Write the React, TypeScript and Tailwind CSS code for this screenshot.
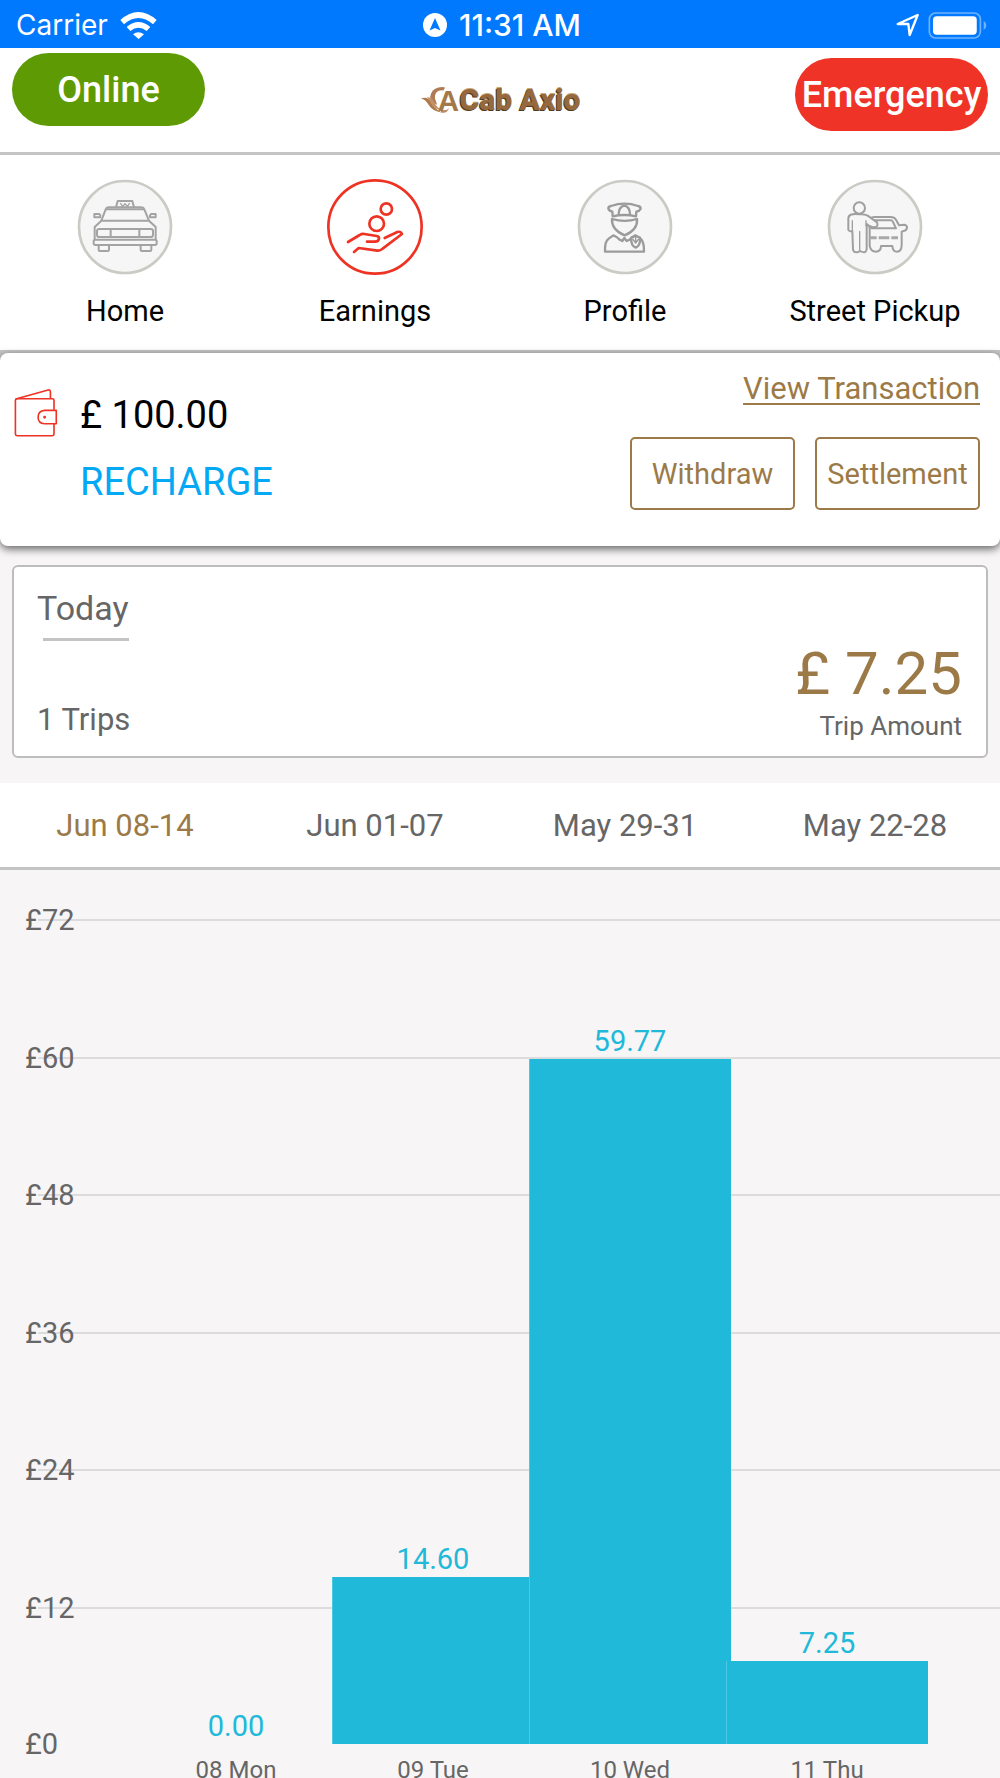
import type { ReactNode } from "react";

type NavItem = { label: string; icon: ReactNode; active?: boolean };

type Day = { label: string; amount: number };

const AXIS_MAX = 72;
const ticks = [72, 60, 48, 36, 24, 12];

const days: Day[] = [
  { label: "08 Mon", amount: 0 },
  { label: "09 Tue", amount: 14.6 },
  { label: "10 Wed", amount: 59.77 },
  { label: "11 Thu", amount: 7.25 },
];

const weeks = ["Jun 08-14", "Jun 01-07", "May 29-31", "May 22-28"];

const navItems: NavItem[] = [
  { label: "Home", icon: <TaxiIcon /> },
  { label: "Earnings", icon: <EarningsIcon />, active: true },
  { label: "Profile", icon: <DriverIcon /> },
  { label: "Street Pickup", icon: <PickupIcon /> },
];

function TaxiIcon() {
  return (
    <g fill="none" stroke="#a3a3a3" strokeWidth="6" strokeLinejoin="round">
      <path d="M168 126l5-19h44l5 19" />
      <path d="M181 113l7 11 7-9 7 9 7-11" strokeWidth="4" />
      <path d="M124 166l13-34q2-6 8-6h100q6 0 8 6l14 34z" />
      <path d="M138 132h114" />
      <path d="M121 150l-3-4h-15v10h17zM270 150l3-4h14v10h-17z" />
      <path d="M124 166l-20 19v38M267 166l20 19v38" />
      <rect x="111" y="191" width="168" height="24" rx="7" />
      <path d="M152 191v24M238 191v24" />
      <rect x="101" y="223" width="189" height="16" rx="5" />
      <path d="M116 239v14q0 4 4 4h23q4 0 4-4v-14M242 239v14q0 4 4 4h24q4 0 4-4v-14" />
    </g>
  );
}

function EarningsIcon() {
  return (
    <g fill="none" stroke="#ee3324" strokeWidth="8" strokeLinecap="round" strokeLinejoin="round">
      <circle cx="229" cy="131" r="17" />
      <circle cx="200" cy="175" r="22" />
      <path d="M114 230l35-21q6-4 14-3l37 6q8 2 7 8-1 9-12 9h-24" />
      <path d="M224 218l38-18q10-3 14 6l-58 44q-7 7-16 6l-56-8-14 12" />
    </g>
  );
}

function DriverIcon() {
  return (
    <g fill="none" stroke="#9b9b9b" strokeWidth="7" strokeLinejoin="round">
      <path d="M145 130q0-7 8-8 41-14 81 0 8 1 8 8-3 7-13 9l-1 14q-35-8-70 0l-1-14q-10-2-12-9z" />
      <path d="M176 149q0-25 17-28 17 3 17 28" />
      <path d="M156 161q38 11 75 0 3 32-37 49-40-17-38-49z" />
      <path d="M135 259q-1-32 11-39l14-10q11 4 19 13l8 4 6-9 7 9 9-4q7-9 17-13l14 9q13 8 12 40z" />
      <path d="M214 217l13-5 13 5q2 24-13 30-15-6-13-30z" fill="#f6f6f6" />
      <path d="M218 221l9 12 9-12M227 215v16" strokeWidth="4" />
    </g>
  );
}

function PickupIcon() {
  return (
    <g fill="#f6f6f6" stroke="#9f9f9f" strokeWidth="6" strokeLinejoin="round">
      <path d="M178 170q0-14 15-15h49q11 0 16 8l9 17 16-2q8 1 8 8-1 10-10 11l-6 2v41q-1 19-14 19-13 0-14-17h-34q0 17-16 17-14 0-18-17v-49z" />
      <path d="M188 165h54q5 0 7 5l9 19h-74z" />
      <circle cx="148" cy="128" r="17" />
      <path d="M148 147q-32-5-33 12v35q2 5 12 3l2 55q2 10 12 9l10-4q16 10 19-5v-76q12 13 26 9 10-2 5-14l-28-20q-9-5-25-4z" />
      <path d="M149 197v57M127 165v29M168 165v17" strokeWidth="4" />
      <path d="M179 217h21M206 217h32M244 217h20" stroke="#a9a9a9" strokeWidth="9" />
    </g>
  );
}

function WalletIcon() {
  return (
    <svg viewBox="42 146 135 148" className="h-12 w-11" fill="none" stroke="#ee3324" strokeWidth="5" strokeLinejoin="round" aria-hidden="true">
      <path d="M47 177l100-28q7-1 7 6v21" />
      <path d="M165 210v-29q0-5-5-5H51q-5 0-5 5v104q0 5 5 5h109q5 0 5-5v-31" />
      <path d="M172 212h-36q-20 2-20 21 0 19 20 20h36z" />
      <circle cx="136" cy="233" r="2" />
    </svg>
  );
}

function Logo() {
  return (
    <div className="flex items-center">
      <svg viewBox="54 40 122 88" className="h-7 w-10 overflow-visible" aria-hidden="true">
        <path d="M84 74q4-24 26-29 12-3 21 0l-5 9q-28-3-27 25l7 20q-22-9-22-25z" fill="#b07a52" />
        <path d="M55 80q18-9 31 8 7 21 34 35-28-3-41-24-9-17-24-19z" fill="#ad7a4c" />
        <path d="M73 75q18 0 24 15 8 20 27 26-28-1-36-20-5-14-15-21z" fill="#c39268" />
        <path d="M118 112q14 10 26-3-9 20-26 14z" fill="#b98960" />
        <text x="107" y="119" fontFamily="Liberation Sans, sans-serif" fontWeight="700" fontSize="94" fill="#a4794a">A</text>
      </svg>
      <span className="text-[30px] leading-8 font-black text-[#96683e] [text-shadow:-1px_1px_0_#4f3a22,0_-1px_0_#c8a878]">Cab Axio</span>
    </div>
  );
}

function StatusBar() {
  return (
    <div className="grid h-12 shrink-0 grid-cols-[1fr_auto_1fr] items-center bg-[#0079ff] pt-[2px] pl-4 pr-3 font-['Inter',sans-serif] text-[28px] leading-8 text-white">
      <div className="flex items-center gap-3">
        <span>Carrier</span>
        <svg viewBox="360 30 111 81" className="h-[27px] w-[37px]" fill="currentColor" aria-hidden="true">
          <path d="M361 54q54-48 109 0l-11 13q-44-38-87 0z" />
          <path d="M380 75q35-30 71 0l-11 12q-25-20-49 0z" />
          <path d="M399 97q16-13 33 0l-16 14z" />
        </svg>
      </div>
      <div className="flex items-center gap-3 text-[30px] font-medium">
        <svg viewBox="0 0 24 24" className="size-6" aria-hidden="true">
          <circle cx="12" cy="12" r="12" fill="#fff" />
          <path d="M12 5l5.500 12.500L12 15l-5.500 2.500z" fill="#0079ff" />
        </svg>
        <span>11:31 AM</span>
      </div>
      <div className="flex items-center justify-end gap-2">
        <svg viewBox="1185 39 72 72" className="size-6" fill="none" stroke="#fff" strokeWidth="7" strokeLinejoin="round" aria-hidden="true">
          <path d="M1190 72l60-27-24 60-4-33z" />
        </svg>
        <svg viewBox="1284 32 180 82" className="h-[27px] w-[60px]" aria-hidden="true">
          <rect x="1287" y="35" width="155" height="76" rx="19" fill="none" stroke="#6db3ff" strokeWidth="5" />
          <rect x="1298" y="45" width="133" height="56" rx="11" fill="#fff" />
          <path d="M1452 59q8 4 8 14t-8 14z" fill="#6db3ff" />
        </svg>
      </div>
    </div>
  );
}

function Header() {
  return (
    <header className="grid h-[107px] shrink-0 grid-cols-[1fr_auto_1fr] items-start border-b-3 border-[#c4c4c4] bg-white px-3">
      <button type="button" className="mt-[5px] h-[73px] w-[193px] rounded-full bg-[#5e9a04] text-[36px] leading-10 font-medium text-white">
        Online
      </button>
      <div className="mt-9">
        <Logo />
      </div>
      <button type="button" className="mt-[10px] h-[73px] w-[193px] justify-self-end rounded-full bg-[#ef3326] text-[36px] leading-10 font-medium text-white">
        Emergency
      </button>
    </header>
  );
}

function MainNav() {
  return (
    <nav className="grid shrink-0 grid-cols-4 border-b-3 border-[#c4c4c4] bg-white pt-6 pb-[21px]">
      {navItems.map((item) => (
        <a key={item.label} href="#" className="flex flex-col items-center gap-[18px] text-[29px] leading-9 text-black">
          <svg viewBox="51 41 288 288" className="size-24" aria-hidden="true">
            <circle
              cx="195"
              cy="185"
              r={item.active ? 140 : 138}
              fill={item.active ? "#fff" : "#f6f6f6"}
              stroke={item.active ? "#ee3324" : "#cbcac4"}
              strokeWidth="8"
            />
            {item.icon}
          </svg>
          {item.label}
        </a>
      ))}
    </nav>
  );
}

function WalletCard() {
  const outline = "h-[73px] w-[165px] rounded-[5px] border-2 border-[#9c7a48] text-[29px] leading-9";

  return (
    <section className="bg-linear-to-b from-[#c4c4c4] from-10% to-[#f7f5f6] to-10%">
      <div className="flex justify-between rounded-lg bg-white pl-[14px] pr-5 shadow-[0_3px_8px_rgba(0,0,0,0.6)]">
        <div className="flex gap-[22px] pt-9 pb-10">
          <WalletIcon />
          <div className="flex flex-col items-start gap-[19px] pt-[2px] text-[38px] leading-12">
            <span className="text-black">£ 100.00</span>
            <button type="button" className="text-[#03a9f4]">RECHARGE</button>
          </div>
        </div>
        <div className="flex flex-col items-end gap-7 pt-4 text-[#9c7a48]">
          <a href="#" className="text-[31px] leading-10 underline decoration-2 underline-offset-4">View Transaction</a>
          <div className="flex gap-5">
            <button type="button" className={outline}>Withdraw</button>
            <button type="button" className={outline}>Settlement</button>
          </div>
        </div>
      </div>
    </section>
  );
}

function TodayCard() {
  return (
    <section className="mx-3 mt-[19px] mb-[25px] flex h-[193px] shrink-0 justify-between rounded-md border-2 border-[#bdbdbd] bg-white pl-[23px] pr-6 text-[#666]">
      <div className="flex flex-col pt-[21px] pb-4">
        <h2 className="text-[34px] leading-10">Today</h2>
        <div className="mt-[10px] ml-[6px] h-[3px] w-[86px] bg-[#c4c4c4]" />
        <span className="mt-auto text-[31px] leading-10">1 Trips</span>
      </div>
      <div className="flex flex-col items-end justify-end pb-[10px]">
        <span className="text-[60px] leading-16 text-[#9c7a48]">£ 7.25</span>
        <span className="text-[26px] leading-10">Trip Amount</span>
      </div>
    </section>
  );
}

function WeekTabs() {
  return (
    <div className="grid shrink-0 grid-cols-4 border-b-3 border-[#c4c4c4] bg-white">
      {weeks.map((week, i) => (
        <button
          key={week}
          type="button"
          className={["pt-[23px] pb-[21px] text-[31px] leading-10", i === 0 ? "text-[#9c7a48]" : "text-[#666]"].join(" ")}
        >
          {week}
        </button>
      ))}
    </div>
  );
}

function EarningsChart() {
  return (
    <section className="shrink-0 pt-[49px] text-[#666]">
      <div className="relative h-[825px] text-[29px] leading-9">
        <div className="flex h-full flex-col">
          {ticks.map((tick) => (
            <div key={tick} className="relative flex-1">
              <div className="ml-[38px] h-[2px] bg-[#dcdcdc]" />
              <span className="absolute -top-[17px] left-[25px]">£{tick}</span>
            </div>
          ))}
          <span className="absolute -bottom-[18px] left-[25px]">£0</span>
        </div>

        {/* Bars */}
        <div className="absolute inset-0 grid grid-cols-4 pl-[135px] pr-[77px]">
          {days.map((day) => (
            <div key={day.label} className="-mr-[5px] flex flex-col justify-end text-center">
              <span className="text-[#20b9d9]">{day.amount.toFixed(2)}</span>
              <div
                className="shrink-0 border-l border-[#4dc8e1] bg-[#20b9d9]"
                style={{ height: `${(day.amount / AXIS_MAX) * 100}%` }}
              />
            </div>
          ))}
        </div>
      </div>

      <div className="grid grid-cols-4 pt-2 pl-[135px] pr-[77px]">
        {days.map((day) => (
          <span key={day.label} className="-mr-[5px] text-center text-[24px] leading-9">{day.label}</span>
        ))}
      </div>
    </section>
  );
}

export default function App() {
  return (
    <div className="flex h-screen flex-col overflow-hidden bg-[#f7f5f6] font-['Roboto',sans-serif]">
      <StatusBar />
      <Header />
      <MainNav />
      <main className="flex flex-col">
        <WalletCard />
        <TodayCard />
        <WeekTabs />
        <EarningsChart />
      </main>
    </div>
  );
}
